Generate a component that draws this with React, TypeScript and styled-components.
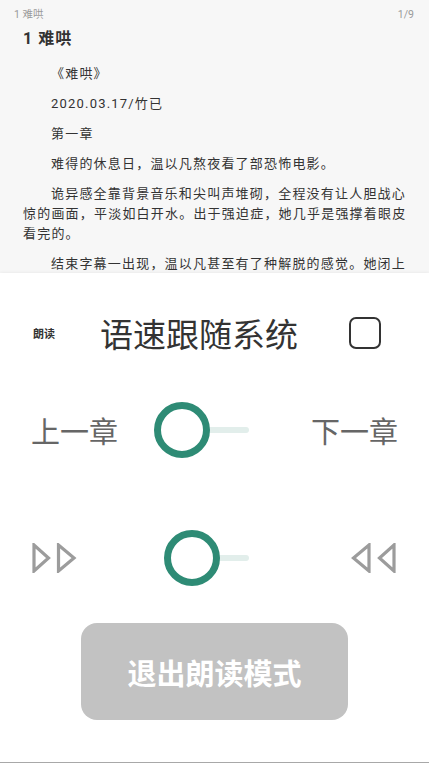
import React from "react";
import styled, { createGlobalStyle } from "styled-components";

const Global = createGlobalStyle`
  html, body { margin: 0; padding: 0; background: #ffffff; }
  body { width: 429px; height: 763px; overflow: hidden; font-family: Roboto, "Noto Sans CJK SC", sans-serif; }
`;

const Page = styled.div`
  width: 429px;
  height: 763px;
  display: flex;
  flex-direction: column;
  overflow: hidden;
`;

const Reader = styled.div`
  height: 273px;
  flex: none;
  background: #f7f7f7;
  overflow: hidden;
  box-sizing: border-box;
  padding: 8px 15px 0 23px;
`;

const Header = styled.div`
  display: flex;
  justify-content: space-between;
  margin-left: -9px;
  font-family: Roboto, "Noto Sans CJK SC", sans-serif;
  font-size: 10.5px;
  line-height: 14px;
  color: #9a9a9a;
`;

const Title = styled.h1`
  margin: 5px 0 0 0;
  font-family: Roboto, "Noto Sans CJK SC", sans-serif;
  font-size: 16px;
  line-height: 24px;
  font-weight: 700;
  color: #333333;
  letter-spacing: 1px;
`;

const Para = styled.p`
  margin: 10px 0 0 0;
  width: 384px;
  font-family: Roboto, "Noto Sans CJK SC", sans-serif;
  font-size: 13px;
  line-height: 20px;
  letter-spacing: 1.2px;
  color: #333333;
  text-indent: 28px;
  &:first-of-type { margin-top: 13px; }
`;

const Panel = styled.div`
  flex: 1;
  background: #ffffff;
  box-shadow: 0 -1px 3px rgba(0, 0, 0, 0.05);
  border-bottom: 1px solid #a8a8a8;
  display: flex;
  flex-direction: column;
  padding-top: 28px;
  box-sizing: border-box;
`;

const Row = styled.div<{ $top: number; $left: number; $right: number }>`
  height: 64px;
  margin-top: ${(p) => p.$top}px;
  padding: 0 ${(p) => p.$right}px 0 ${(p) => p.$left}px;
  display: flex;
  align-items: center;
`;

const SmallLabel = styled.span`
  font-family: "Noto Sans CJK SC", sans-serif;
  font-size: 11px;
  font-weight: 700;
  color: #333333;
`;

const BigTitle = styled.span`
  margin-left: 45px;
  font-family: "Noto Sans CJK SC", sans-serif;
  font-size: 33px;
  line-height: 40px;
  color: #333333;
`;

const Checkbox = styled.div`
  margin-left: auto;
  width: 32px;
  height: 32px;
  box-sizing: border-box;
  border: 2.5px solid #333333;
  border-radius: 7px;
`;

const ChapterLabel = styled.span<{ $auto?: boolean }>`
  font-family: "Noto Sans CJK SC", sans-serif;
  font-size: 29px;
  line-height: 40px;
  color: #666666;
  margin-left: ${(p) => (p.$auto ? "auto" : "0")};
`;

const SliderBox = styled.div<{ $w: number; $ml: number }>`
  position: relative;
  width: ${(p) => p.$w}px;
  height: 56px;
  margin-left: ${(p) => p.$ml}px;
  flex: none;
`;

const Track = styled.div`
  position: absolute;
  left: 28px;
  right: 0;
  top: 25px;
  height: 6px;
  border-radius: 3px;
  background: #e2eeeb;
`;

const Thumb = styled.div`
  position: absolute;
  left: 0;
  top: 0;
  width: 56px;
  height: 56px;
  box-sizing: border-box;
  border-radius: 50%;
  border: 7.5px solid #2e8b75;
  background: #ffffff;
`;

const IconWrap = styled.div<{ $auto?: boolean }>`
  display: flex;
  margin-left: ${(p) => (p.$auto ? "auto" : "0")};
`;

const ExitButton = styled.button`
  margin: 33px 0 0 81px;
  width: 267px;
  height: 97px;
  border: none;
  border-radius: 16px;
  background: #c2c2c2;
  color: #ffffff;
  font-family: "Noto Sans CJK SC", sans-serif;
  font-size: 29px;
  font-weight: 700;
  padding: 0;
`;

const Slider = ({ width, ml }: { width: number; ml: number }) => (
  <SliderBox $w={width} $ml={ml}>
    <Track />
    <Thumb />
  </SliderBox>
);

const Forward = () => (
  <svg width="46" height="30" viewBox="0 0 46 30">
    <polygon points="2,2 2,28 16.5,15" fill="none" stroke="#9c9c9c" strokeWidth="3.2" strokeLinejoin="miter" />
    <polygon points="26.5,2 26.5,28 42,15" fill="none" stroke="#9c9c9c" strokeWidth="3.2" strokeLinejoin="miter" />
  </svg>
);

const Rewind = () => (
  <svg width="46" height="30" viewBox="0 0 46 30">
    <polygon points="19,2 19,28 3.5,15" fill="none" stroke="#9c9c9c" strokeWidth="3.2" strokeLinejoin="miter" />
    <polygon points="44,2 44,28 29.5,15" fill="none" stroke="#9c9c9c" strokeWidth="3.2" strokeLinejoin="miter" />
  </svg>
);

export default function App() {
  return (
    <Page>
      <Global />
      <Reader>
        <Header>
          <span>1 难哄</span>
          <span>1/9</span>
        </Header>
        <Title>1 难哄</Title>
        <Para>《难哄》</Para>
        <Para>2020.03.17/竹已</Para>
        <Para>第一章</Para>
        <Para>难得的休息日，温以凡熬夜看了部恐怖电影。</Para>
        <Para>诡异感全靠背景音乐和尖叫声堆砌，全程没有让人胆战心惊的画面，平淡如白开水。出于强迫症，她几乎是强撑着眼皮看完的。</Para>
        <Para>结束字幕一出现，温以凡甚至有了种解脱的感觉。她闭上</Para>
      </Reader>
      <Panel>
        <Row $top={0} $left={33} $right={48}>
          <SmallLabel>朗读</SmallLabel>
          <BigTitle>语速跟随系统</BigTitle>
          <Checkbox />
        </Row>
        <Row $top={33} $left={31} $right={31}>
          <ChapterLabel>上一章</ChapterLabel>
          <Slider width={95} ml={36} />
          <ChapterLabel $auto>下一章</ChapterLabel>
        </Row>
        <Row $top={64} $left={32} $right={33}>
          <IconWrap>
            <Forward />
          </IconWrap>
          <Slider width={85} ml={86} />
          <IconWrap $auto>
            <Rewind />
          </IconWrap>
        </Row>
        <ExitButton>退出朗读模式</ExitButton>
      </Panel>
    </Page>
  );
}
